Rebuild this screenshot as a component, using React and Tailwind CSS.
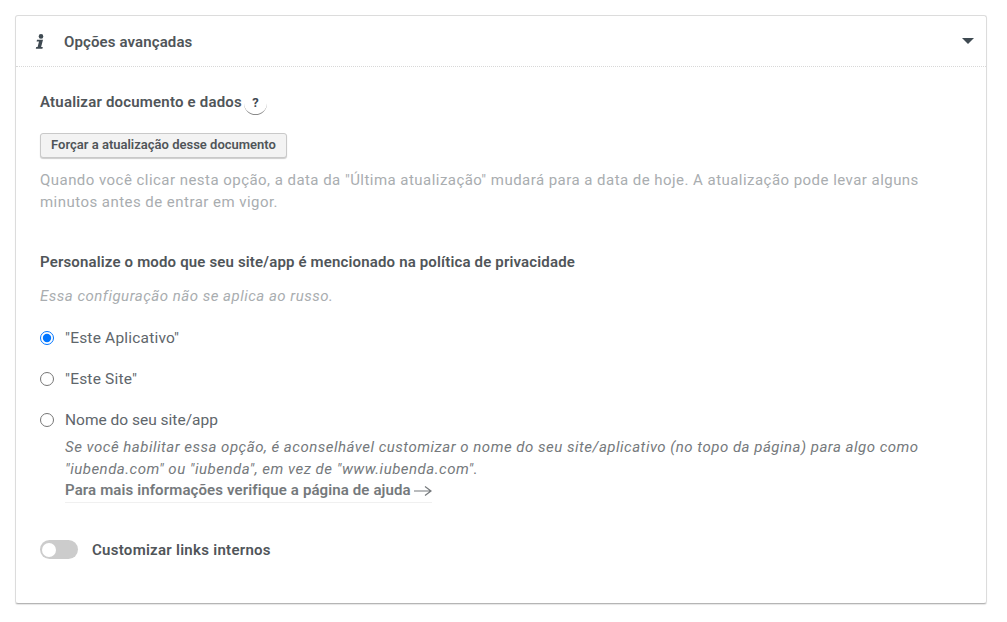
const App = () => {
  return (
    <div className="min-h-[622px] bg-white px-[15px] pt-[15px] font-['Roboto',sans-serif] text-[#505559]">
      <div className="w-[972px] h-[589px] rounded-[3px] border border-[#dcdcdc] border-b-[#b5b5b5] shadow-[0_1px_1px_rgba(0,0,0,0.1)]">
        {/* header */}
        <div className="flex items-center justify-between h-[51px] border-b border-dotted border-[#d8d8d8] pl-[19px] pr-[12px]">
          <div className="flex items-center">
            <svg width="10" height="16" viewBox="0 0 10 16" className="mt-[1px]">
              <circle cx="6" cy="2.4" r="2.3" fill="#3f4a52" />
              <path d="M2 5.8h6L6.1 13h1.7l-.4 1.8H.8l.4-1.8h1.4L4 7.6H1.6z" fill="#3f4a52" />
            </svg>
            <span className="ml-[19px] mt-[2px] text-[15px] font-semibold tracking-[0.12px]">Opções avançadas</span>
          </div>
          <svg width="12" height="6" viewBox="0 0 12 6">
            <path d="M0 0h12L6 6z" fill="#3f4a52" />
          </svg>
        </div>

        <div className="pl-[24px] pr-[24px]">
          <div className="flex items-center mt-[23px] h-[24px]">
            <h3 className="text-[15px] font-semibold tracking-[0.2px]">Atualizar documento e dados</h3>
            <span className="ml-[2px] mt-[3px] flex items-center justify-center w-[23px] h-[23px] rounded-full border-b border-[#8a8a8a] text-[13px] font-bold text-[#3f4a52]">?</span>
          </div>

          <button className="flex items-center justify-center pb-[1px] mt-[19px] h-[25px] w-[247px] rounded-[3px] border border-[#c9c9c9] bg-[#f3f3f3] shadow-[0_1px_1px_rgba(0,0,0,0.2)] text-[13px] font-semibold">
            Forçar a atualização desse documento
          </button>

          <p className="mt-[11px] text-[15px] leading-[22px] text-[#a9adb0] tracking-[0.46px]">
            Quando você clicar nesta opção, a data da "Última atualização" mudará para a data de hoje. A atualização pode levar alguns minutos antes de entrar em vigor.
          </p>

          <h3 className="mt-[38px] text-[15px] leading-[22px] font-semibold tracking-[0.16px]">
            Personalize o modo que seu site/app é mencionado na política de privacidade
          </h3>
          <p className="mt-[12px] text-[15px] leading-[22px] italic text-[#a9adb0] tracking-[0.5px]">
            Essa configuração não se aplica ao russo.
          </p>

          <div className="flex flex-col gap-[19px] mt-[20px] text-[15.5px] leading-[22px] text-[#60666b]">
            <label className="flex items-center h-[22px]">
              <input type="radio" name="site" defaultChecked className="w-[14px] h-[14px] m-0 accent-[#0075ff]" />
              <span className="ml-[11px] tracking-[0.2px]">"Este Aplicativo"</span>
            </label>
            <label className="flex items-center h-[22px]">
              <input type="radio" name="site" className="w-[14px] h-[14px] m-0" />
              <span className="ml-[11px] tracking-[0.2px]">"Este Site"</span>
            </label>
            <label className="flex items-center h-[22px]">
              <input type="radio" name="site" className="w-[14px] h-[14px] m-0" />
              <span className="ml-[11px]">Nome do seu site/app</span>
            </label>
          </div>

          <div className="ml-[25px] mt-[6px] pr-[30px] text-[15px] leading-[21.5px] text-[#75797c]">
            <p className="italic tracking-[0.5px]">
              Se você habilitar essa opção, é aconselhável customizar o nome do seu site/aplicativo (no topo da página) para algo como "iubenda.com" ou "iubenda", em vez de "www.iubenda.com".
            </p>
            <a className="inline-flex items-center font-semibold tracking-[0.12px] border-b border-[#f0f0f0] text-[#75797c]">
              Para mais informações verifique a página de ajuda
              <svg width="18" height="12" viewBox="0 0 18 12" className="ml-[3px]">
                <path d="M0 6h17M11 1.5l6 4.5-6 4.5" fill="none" stroke="#75797c" strokeWidth="1.2" />
              </svg>
            </a>
          </div>

          <div className="flex items-center mt-[36px]">
            <div className="flex items-center w-[38px] h-[19px] rounded-full bg-[#cccccc] pl-[2px]">
              <div className="w-[14px] h-[14px] rounded-full bg-white" />
            </div>
            <span className="ml-[14px] text-[15px] font-semibold tracking-[0.28px]">Customizar links internos</span>
          </div>
        </div>
      </div>
    </div>
  );
};

export default App;
